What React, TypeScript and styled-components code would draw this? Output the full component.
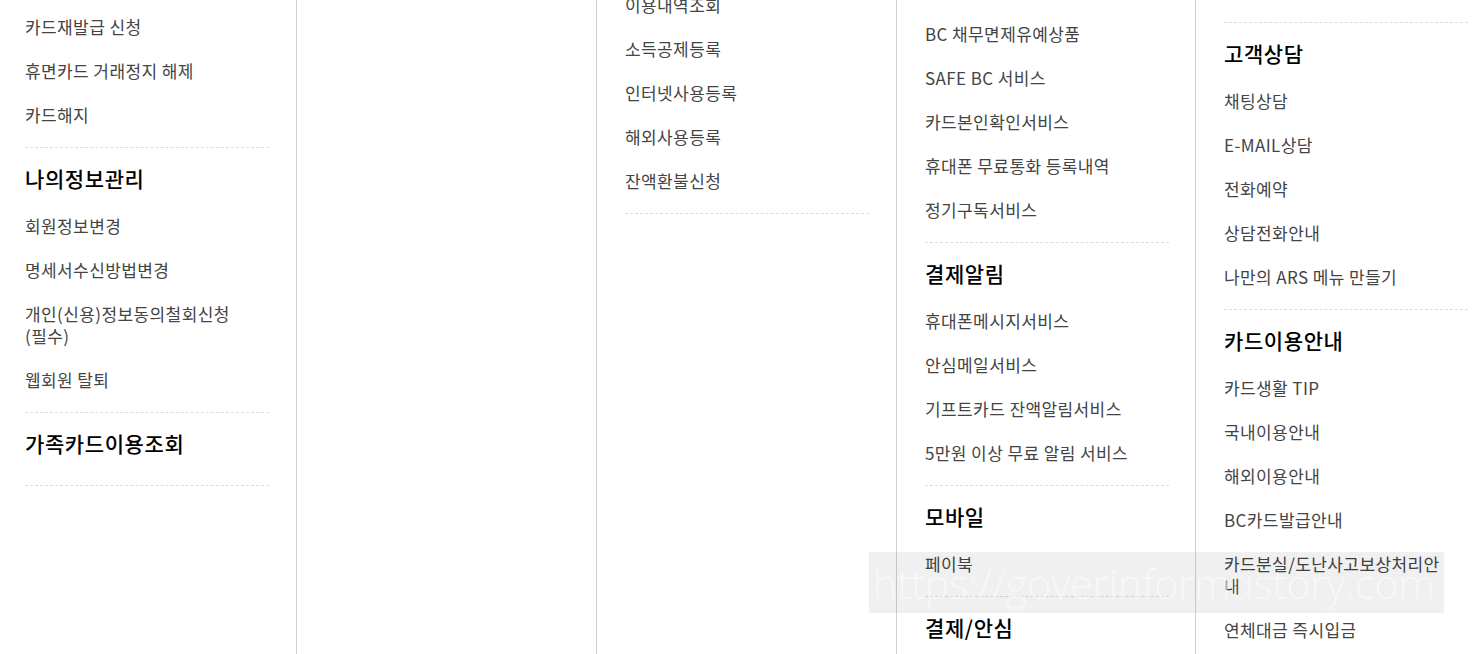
import styled, { createGlobalStyle } from 'styled-components';

interface MenuGroup {
    title?: string;
    items: string[];
}

interface MenuColumn {
    inset: number;
    offset: number;
    groups: MenuGroup[];
}

const columns: MenuColumn[] = [
    {
        inset: 25,
        offset: 5,
        groups: [
            { items: ['카드재발급 신청', '휴면카드 거래정지 해제', '카드해지'] },
            {
                title: '나의정보관리',
                items: ['회원정보변경', '명세서수신방법변경', '개인(신용)정보동의철회신청 (필수)', '웹회원 탈퇴'],
            },
            { title: '가족카드이용조회', items: [] },
        ],
    },
    { inset: 28, offset: 0, groups: [] },
    {
        inset: 28,
        offset: -17,
        groups: [{ items: ['이용내역조회', '소득공제등록', '인터넷사용등록', '해외사용등록', '잔액환불신청'] }],
    },
    {
        inset: 28,
        offset: 12,
        groups: [
            {
                items: [
                    'BC 채무면제유예상품',
                    'SAFE BC 서비스',
                    '카드본인확인서비스',
                    '휴대폰 무료통화 등록내역',
                    '정기구독서비스',
                ],
            },
            {
                title: '결제알림',
                items: ['휴대폰메시지서비스', '안심메일서비스', '기프트카드 잔액알림서비스', '5만원 이상 무료 알림 서비스'],
            },
            { title: '모바일', items: ['페이북'] },
            { title: '결제/안심', items: ['안심클릭', '가맹점 안내'] },
        ],
    },
    {
        inset: 28,
        offset: 12,
        groups: [
            { items: [] },
            {
                title: '고객상담',
                items: ['채팅상담', 'E-MAIL상담', '전화예약', '상담전화안내', '나만의 ARS 메뉴 만들기'],
            },
            {
                title: '카드이용안내',
                items: [
                    '카드생활 TIP',
                    '국내이용안내',
                    '해외이용안내',
                    'BC카드발급안내',
                    '카드분실/도난사고보상처리안내',
                    '연체대금 즉시입금',
                ],
            },
        ],
    },
];

const App = () => {
    return (
        <>
            <GlobalStyle />
            <Page>
                <SiteMap>
                    {columns.map((column, ci) => (
                        <Column key={ci} $inset={column.inset}>
                            <ColumnBody $offset={column.offset}>
                                {column.groups.map((group, gi) => (
                                    <Group key={gi} $cut={!group.title}>
                                        {group.title && (
                                            <GroupTitle $alone={group.items.length === 0}>{group.title}</GroupTitle>
                                        )}
                                        {group.items.length > 0 && (
                                            <ItemList $hasTitle={!!group.title}>
                                                {group.items.map((item) => (
                                                    <Item key={item}>
                                                        <ItemLink href="#">{item}</ItemLink>
                                                    </Item>
                                                ))}
                                            </ItemList>
                                        )}
                                    </Group>
                                ))}
                            </ColumnBody>
                        </Column>
                    ))}
                </SiteMap>
                <Watermark>https://goverinformtistory.com</Watermark>
            </Page>
        </>
    );
};

export default App;

const GlobalStyle = createGlobalStyle`
    html, body {
        margin: 0;
        padding: 0;
        background: #ffffff;
        overflow: hidden;
    }
    * {
        box-sizing: border-box;
    }
`;

const Page = styled.div`
    position: relative;
    width: 100vw;
    height: 100vh;
    overflow: hidden;
    font-family: 'Noto Sans CJK KR', 'Noto Sans', sans-serif;
`;

const SiteMap = styled.div`
    display: grid;
    grid-template-columns: 297px 300px 300px 299px 1fr;
    height: 100%;
`;

interface ColumnProps {
    $inset: number;
}

const Column = styled.div<ColumnProps>`
    height: 100%;
    padding-left: ${(props) => props.$inset}px;
    border-right: 1px solid #d2d2d2;
    overflow: hidden;

    &:last-child {
        border-right: none;
    }
`;

interface ColumnBodyProps {
    $offset: number;
}

const ColumnBody = styled.div<ColumnBodyProps>`
    width: 244px;
    margin-top: ${(props) => props.$offset}px;
`;

interface GroupProps {
    $cut: boolean;
}

const Group = styled.div<GroupProps>`
    padding: ${(props) => (props.$cut ? '0' : '15px')} 0 10px;
    border-bottom: 1px dashed #dddddd;
`;

interface GroupTitleProps {
    $alone: boolean;
}

const GroupTitle = styled.h3<GroupTitleProps>`
    margin: 0 0 ${(props) => (props.$alone ? '17px' : '0')};
    font-size: 21px;
    line-height: 30px;
    letter-spacing: 0.6px;
    font-weight: 500;
    color: #000000;
`;

interface ItemListProps {
    $hasTitle: boolean;
}

const ItemList = styled.ul<ItemListProps>`
    list-style: none;
    margin: ${(props) => (props.$hasTitle ? '11px' : '0')} 0 0;
    padding: 0;
`;

const Item = styled.li`
    padding: 11px 0;
    font-size: 17px;
    line-height: 22px;
`;

const ItemLink = styled.a`
    display: block;
    max-width: 225px;
    letter-spacing: 0.4px;
    color: #444444;
    text-decoration: none;
`;

const Watermark = styled.div`
    position: absolute;
    left: 869px;
    top: 552px;
    width: 575px;
    height: 61px;
    display: flex;
    align-items: center;
    padding-left: 4px;
    background: rgba(0, 0, 0, 0.06);
    color: rgba(255, 255, 255, 0.55);
    font-family: 'Open Sans', 'Liberation Sans', sans-serif;
    font-weight: 300;
    font-size: 41px;
    white-space: nowrap;
    overflow: hidden;
    pointer-events: none;
`;
